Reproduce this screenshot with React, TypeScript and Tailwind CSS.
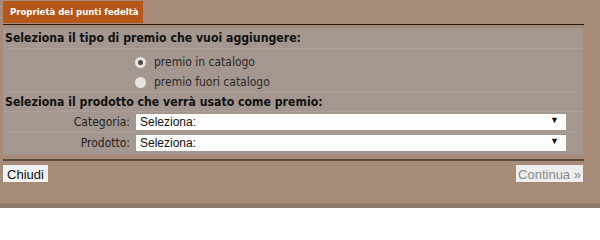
import { useState } from 'react';

const OPTIONS = ['premio in catalogo', 'premio fuori catalogo'];

function SelectRow({ label }: { label: string }) {
  return (
    <div className="flex h-[21px] items-center border-t border-[#aa9f97]">
      <div className="w-[133px] shrink-0 pr-[6px] text-right text-[12px] text-[#222]">{label}</div>
      <div className="relative flex h-[16px] w-[430px] items-center bg-[#fdfdfb] pl-[4px] font-['Liberation_Sans',Arial,sans-serif] text-[12px] text-[#111]">
        Seleziona:
        <span className="absolute right-[7px] top-[2px] text-[9px] leading-none">▼</span>
      </div>
    </div>
  );
}

export default function App() {
  const [choice, setChoice] = useState(0);

  return (
    <div className="h-[208px] w-[600px] overflow-hidden bg-[#a68c78] font-['DejaVu_Sans_Condensed','DejaVu_Sans',sans-serif]">
      <div className="pl-[3px] pt-[1px]">
        <div className="flex h-[22px] w-[140px] items-center whitespace-nowrap bg-[#b5561b] pl-[7px] text-[9.5px] font-bold text-white">
          Proprietà dei punti fedeltà
        </div>
      </div>

      <div className="ml-[3px] mt-[1px] h-[1px] w-[581px] bg-[#2a1a10]" />

      <div className="ml-[3px] mt-[3px] w-[580px] bg-[#a3978f]">
        <div className="flex h-[20px] items-center pl-[2px] text-[12.2px] font-bold text-[#111]">
          Seleziona il tipo di premio che vuoi aggiungere:
        </div>
        <div className="border-t border-[#aa9f97] pt-[3px]">
          {OPTIONS.map((o, i) => (
            <label key={o} className="flex h-[20px] cursor-pointer items-center pl-[132px] text-[12px] text-[#2a2a2a]">
              <span className="mr-[8px] flex h-[11px] w-[11px] items-center justify-center rounded-full bg-[#e6e3e1]">
                {choice === i && <span className="h-[5px] w-[5px] rounded-full bg-[#4a4a4a]" />}
              </span>
              <input type="radio" className="hidden" checked={choice === i} onChange={() => setChoice(i)} />
              {o}
            </label>
          ))}
        </div>
        <div className="flex h-[19px] items-center border-t border-[#aa9f97] pl-[2px] text-[12.2px] font-bold text-[#111]">
          Seleziona il prodotto che verrà usato come premio:
        </div>
        <SelectRow label="Categoria:" />
        <SelectRow label="Prodotto:" />
        <div className="h-[2px]" />
      </div>

      <div className="ml-[3px] mt-[4px] h-[2px] w-[581px] bg-[#5b4a3e]" />

      <div className="mt-[4px] flex w-[583px] justify-between pl-[3px] font-['Liberation_Sans',Arial,sans-serif] text-[13px]">
        <button type="button" className="h-[17px] w-[45px] bg-[#f2f2f2] text-[#111]">Chiudi</button>
        <button type="button" disabled className="h-[17px] w-[67px] bg-[#eeeeee] text-[#8a8a8a]">Continua »</button>
      </div>

      <div className="mt-[21px] h-[6px] bg-[#8f7b6d]" />
    </div>
  );
}
